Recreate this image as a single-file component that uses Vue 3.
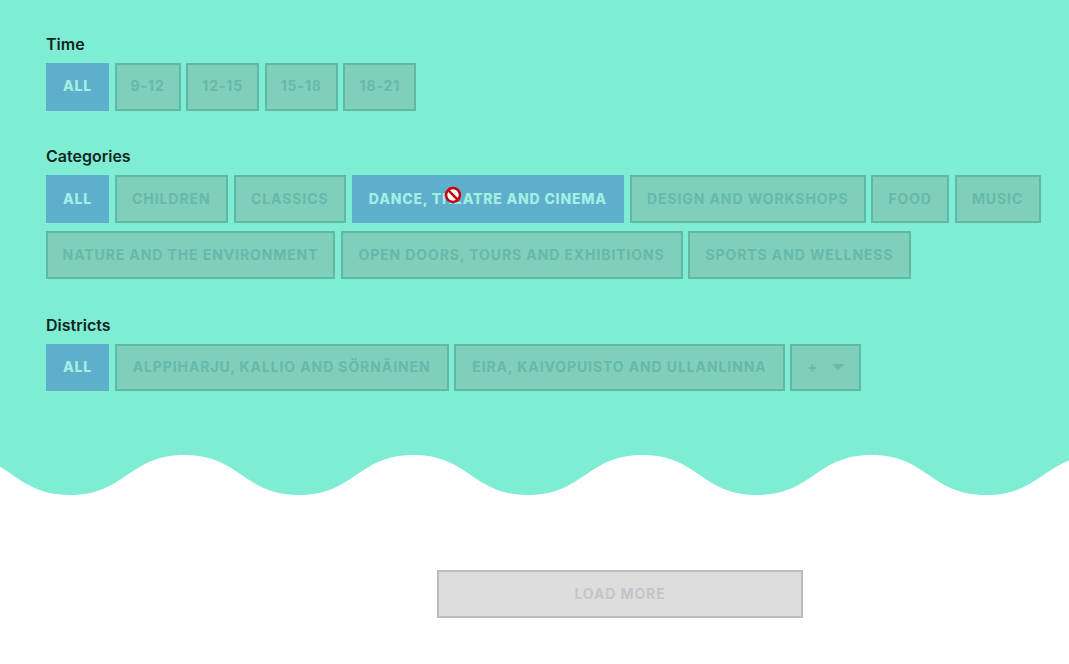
<script setup>
const chip = (label, width, active = false) => ({ label, width, active })

const groups = [
  {
    title: 'Time',
    items: [chip('ALL', 63, true), chip('9-12', 66), chip('12-15', 73), chip('15-18', 73), chip('18-21', 73)],
  },
  {
    title: 'Categories',
    items: [
      chip('ALL', 63, true),
      chip('CHILDREN', 113.4),
      chip('CLASSICS', 112.4),
      chip('DANCE, THEATRE AND CINEMA', 272.6, true),
      chip('DESIGN AND WORKSHOPS', 236),
      chip('FOOD', 77.6),
      chip('MUSIC', 86),
      chip('NATURE AND THE ENVIRONMENT', 289),
      chip('OPEN DOORS, TOURS AND EXHIBITIONS', 342),
      chip('SPORTS AND WELLNESS', 222.6),
    ],
  },
  {
    title: 'Districts',
    items: [chip('ALL', 63, true), chip('ALPPIHARJU, KALLIO AND SÖRNÄINEN', 334), chip('EIRA, KAIVOPUISTO AND ULLANLINNA', 330.6)],
    more: true,
  },
]

const half = 229 / 2
const handle = 56
let wave = `M-44.5 0`
for (let x = -44.5, down = true; x < 1069; x += half, down = !down) {
  const from = down ? 0 : 40
  const to = down ? 40 : 0
  wave += ` C${x + handle} ${from} ${x + half - handle} ${to} ${x + half} ${to}`
}
const wavePath = `${wave} V-1 H-44.5 Z`
</script>

<template>
  <div class="page">
    <section class="filters">
      <div v-for="group in groups" :key="group.title" class="group">
        <h3>{{ group.title }}</h3>
        <div class="options">
          <button
            v-for="item in group.items"
            :key="item.label"
            type="button"
            class="chip"
            :class="{ active: item.active }"
            :style="{ width: `${item.width}px` }"
          >{{ item.label }}</button>
          <button v-if="group.more" type="button" class="chip more">
            <span>+</span>
            <svg width="12" height="6" viewBox="0 0 12 6"><path d="M0 0h12L6 6z" fill="currentColor" /></svg>
          </button>
        </div>
      </div>
      <svg class="no-cursor" width="18" height="18" viewBox="0 0 18 18">
        <circle cx="9" cy="9" r="7" fill="#fff" stroke="#c8000f" stroke-width="2.6" />
        <path d="M4.2 4.2l9.6 9.6" stroke="#c8000f" stroke-width="2.6" />
      </svg>
    </section>
    <svg class="wave" width="1069" height="41" viewBox="0 0 1069 41"><path :d="wavePath" fill="#7fedd3" /></svg>
    <div class="load">
      <button type="button" class="load-more">LOAD MORE</button>
    </div>
  </div>
</template>

<style scoped>
.page { width: 1069px; height: 664px; overflow: hidden; background: #fff; font-family: Inter, "Liberation Sans", sans-serif; }
.filters { position: relative; height: 455px; box-sizing: border-box; padding: 34px 20px 0 46px; background: #7fedd3; }
.group { margin-bottom: 35.8px; }
h3 { margin: 0 0 10px; height: 19px; color: #10251f; font-size: 16px; line-height: 21px; font-weight: 600; }
.options { display: flex; flex-wrap: wrap; gap: 8.4px 5.6px; }
.chip { height: 47.6px; box-sizing: border-box; padding: 0 0 2px; border: 2px solid #5fb9a4; background: #7fcfbc; color: #66baaa; font-family: inherit; font-size: 14px; font-weight: 700; letter-spacing: 0.9px; white-space: nowrap; }
.chip.active { border-color: #5faecb; background: #5faecb; color: #a3f0e2; font-weight: 800; letter-spacing: 0.8px; }
.more { display: flex; align-items: center; justify-content: center; gap: 14px; width: 70.6px; }
.no-cursor { position: absolute; left: 444px; top: 186px; }
.wave { display: block; margin-bottom: 74px; }
.load { padding-left: 437px; }
.load-more { width: 366px; height: 48px; box-sizing: border-box; padding: 0 0 2px; border: 2px solid #bdbdbd; background: #ddd; color: #c4c4cb; font-family: inherit; font-size: 14px; font-weight: 700; letter-spacing: 0.9px; }
</style>
